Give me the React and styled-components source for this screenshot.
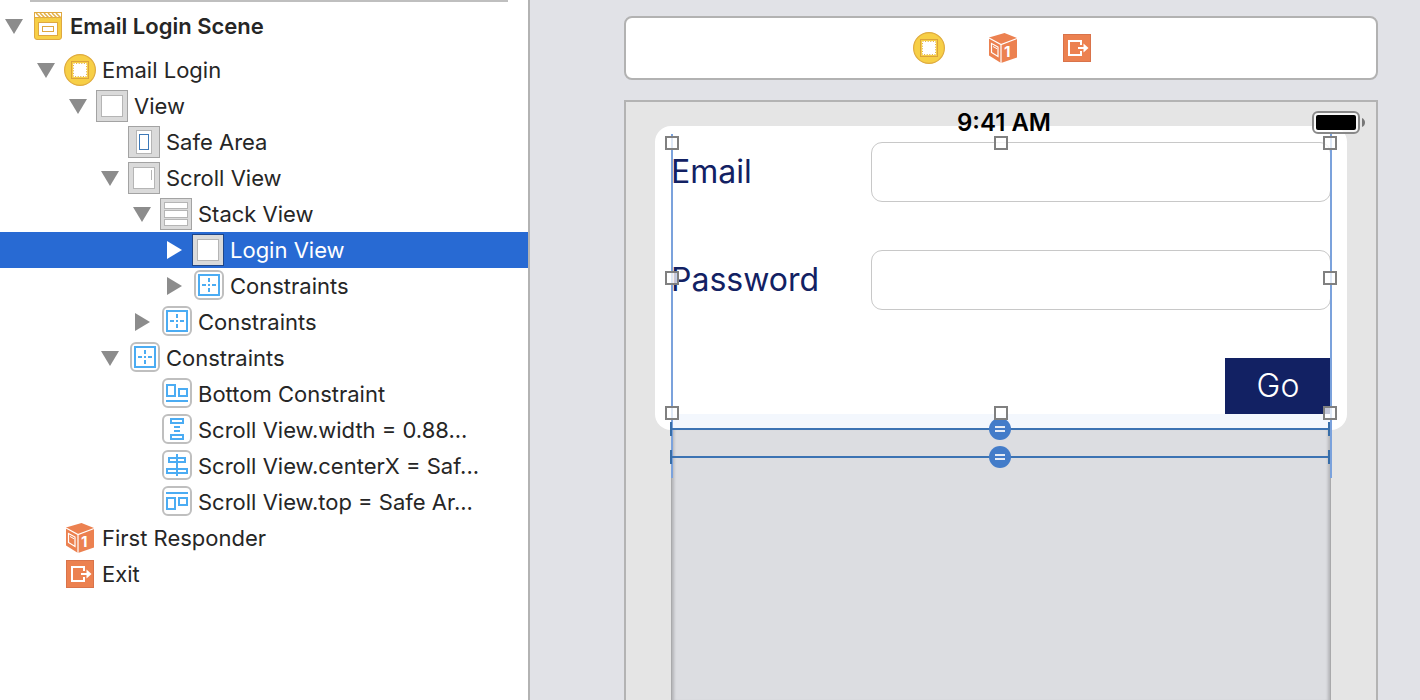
import React from 'react';
import styled, { createGlobalStyle, css } from 'styled-components';

const GlobalStyle = createGlobalStyle`
    * {
        box-sizing: border-box;
    }
    body {
        margin: 0;
        font-family: Inter, "Liberation Sans", sans-serif;
        color: #262626;
        background: #e1e2e7;
    }
`;

const Page = styled.div`
    display: flex;
    height: 100vh;
    min-height: 640px;
    overflow: hidden;
`;

/* Document outline */

const Outline = styled.nav`
    flex: 0 0 530px;
    min-width: 0;
    background: #ffffff;
    border-right: 2px solid #b3b3b3;
`;

const Divider = styled.div`
    height: 2px;
    margin: 0 20px 0 30px;
    background: #bfbfbf;
`;

const Tree = styled.ul`
    list-style: none;
    margin: 0;
    padding: 0;
`;

const Row = styled.li`
    display: flex;
    align-items: center;
    height: 36px;
    padding-left: ${props => props.$depth * 32}px;
    padding-right: 40px;
    font-size: 22px;
    line-height: 28px;
    ${props => props.$scene && css`
        height: 48px;
        margin-bottom: 2px;
        font-weight: 600;
    `}
    ${props => props.$selected && css`
        background: #286ad3;
        color: #ffffff;
    `}
`;

const Toggle = styled.button`
    flex: none;
    display: flex;
    align-items: center;
    justify-content: center;
    width: 28px;
    height: 28px;
    margin-right: 4px;
    padding: 0;
    border: 0;
    background: none;
    color: ${props => (props.$selected ? '#ffffff' : '#8c8c8c')};
`;

const ToggleSpace = styled.span`
    flex: none;
    width: 32px;
`;

const Label = styled.span`
    margin-left: 6px;
    white-space: nowrap;
`;

const Glyph = styled.svg`
    flex: none;
    display: block;
    width: 32px;
    height: 32px;
`;

/* Canvas */

const Canvas = styled.main`
    flex: 1;
    min-width: 0;
    display: flex;
    flex-direction: column;
    gap: 20px;
    padding: 16px 42px 0 94px;
`;

const Dock = styled.div`
    flex: none;
    display: flex;
    align-items: center;
    justify-content: center;
    gap: 42px;
    height: 64px;
    padding-left: 4px;
    background: #ffffff;
    border: 2px solid #b2b2b2;
    border-radius: 8px;
`;

const Device = styled.section`
    flex: 1;
    display: flex;
    flex-direction: column;
    position: relative;
    border: 2px solid #b3b3b3;
    border-bottom: 0;
    background: #e5e5e5;
`;

const StatusBar = styled.div`
    position: absolute;
    top: 0;
    left: 0;
    right: 0;
    display: grid;
    grid-template-columns: 1fr auto 1fr;
    align-items: center;
    height: 42px;
    padding: 0 10px 0 16px;
    color: #000000;
`;

const Time = styled.span`
    grid-column: 2;
    font-size: 24px;
    line-height: 28px;
    font-weight: 600;
`;

const Battery = styled.svg`
    display: block;
    justify-self: end;
    width: 54px;
    height: 24px;
`;

const Card = styled.div`
    flex: none;
    margin: 24px 29px 0;
    padding: 16px 16px 0;
    background: #ffffff;
    border-radius: 16px;
`;

const Selection = styled.div`
    position: relative;
`;

const Form = styled.form`
    display: grid;
    grid-template-columns: 200px 1fr;
    row-gap: 48px;
    color: #122163;
    font-size: 32px;
    line-height: 40px;
`;

const FieldLabel = styled.label`
    align-self: center;
`;

const Field = styled.input`
    width: 100%;
    height: 60px;
    padding: 0 12px;
    border: 1px solid #c8c8c8;
    border-radius: 11px;
    background: #ffffff;
    font: inherit;
    color: inherit;
    outline: none;
`;

const Submit = styled.button`
    grid-column: 2;
    justify-self: end;
    width: 106px;
    height: 56px;
    padding: 0;
    border: 0;
    background: #122163;
    color: #ffffff;
    font: inherit;
    font-weight: 300;
`;

const Tint = styled.div`
    height: 16px;
    background: #f3f7fd;
`;

const ScrollArea = styled.div`
    flex: 1;
    margin: 0 45px;
    background: #dcdde1;
    border: solid #a9a9ab;
    border-width: 0 1px;
    box-shadow: inset 4px 0 3px -2px #b4b4b8, inset -4px 0 3px -2px #b4b4b8;
`;

const Guide = styled.span`
    position: absolute;
    top: -8px;
    bottom: -64px;
    ${props => props.$side}: ${props => (props.$side === 'left' ? 0 : -1)}px;
    width: 2px;
    background: #7ba2dc;
`;

const WidthLine = styled.div`
    position: absolute;
    top: calc(100% + ${props => props.$drop}px);
    left: -1px;
    right: 1px;
    height: 14px;
    display: flex;
    align-items: center;
    justify-content: center;
    border: solid #376da8;
    border-width: 0 2px;
    background: linear-gradient(#3c73b3, #3c73b3) center / 100% 2px no-repeat;
`;

const Equal = styled.svg`
    flex: none;
    width: 22px;
    height: 22px;
`;

const Handles = styled.div`
    position: absolute;
    inset: 1px;
    pointer-events: none;
`;

const Handle = styled.span`
    position: absolute;
    left: ${props => props.$x}%;
    top: ${props => props.$y}%;
    width: 14px;
    height: 14px;
    margin: -7px;
    border: 2px solid #808080;
    background: rgba(255, 255, 255, 0.75);
`;

const handles = [
    [0, 0], [50, 0], [100, 0],
    [0, 50], [100, 50],
    [0, 100], [50, 100], [100, 100],
];

function Arrow({ open }) {
    return (
        <svg width="18" height="18" viewBox="0 0 18 18" fill="currentColor" aria-hidden="true">
            <path d={open ? 'M0 2h18L9 17z' : 'M2 0l15 9-15 9z'} />
        </svg>
    );
}

function SceneIcon() {
    return (
        <Glyph viewBox="0 0 32 32">
            <path d="M2.500 7.500h27V27q0 2.500-2.500 2.500H5Q2.500 29.500 2.500 27z" fill="#f7cf46" stroke="#dfa840" />
            <rect x="2.500" y="2.500" width="27" height="5" fill="#fff" stroke="#dfa840" />
            <path d="M4 3l5 5M8 3l5 5M12 3l5 5M16 3l5 5M20 3l5 5M24 3l5 5" stroke="#e3b044" strokeWidth="1.500" />
            <rect x="6.500" y="12.500" width="19" height="13" fill="#fff" stroke="#dfa840" />
            <rect x="10.500" y="16.500" width="11" height="5" fill="#fff" stroke="#dfa840" />
        </Glyph>
    );
}

function ControllerIcon() {
    return (
        <Glyph viewBox="0 0 32 32">
            <circle cx="16" cy="16" r="15.400" fill="#f7cf46" stroke="#dfab3f" strokeWidth="1.200" />
            <rect x="7.500" y="7.500" width="17" height="17" fill="#f7cf46" stroke="#dba33c" />
            <rect x="9" y="9" width="14" height="14" fill="#fff" />
            <rect x="9.500" y="9.500" width="13" height="13" fill="none" stroke="#dfab3f" strokeDasharray="1 1.600" />
        </Glyph>
    );
}

function FrameIcon({ children, selected }) {
    return (
        <Glyph viewBox="0 0 32 32" fill="#fff" stroke="#b5b5b5">
            <rect x="0.500" y="0.500" width="31" height="31" fill="#dadada" stroke={selected ? '#1f4688' : '#a3a3a3'} />
            {children}
        </Glyph>
    );
}

function ViewIcon({ selected }) {
    return (
        <FrameIcon selected={selected}>
            <rect x="5.500" y="5.500" width="21" height="21" />
        </FrameIcon>
    );
}

function SafeAreaIcon() {
    return (
        <FrameIcon>
            <rect x="8.500" y="4.500" width="15" height="23" />
            <rect x="11.500" y="8.500" width="9" height="15" stroke="#3d79b8" />
        </FrameIcon>
    );
}

function ScrollIcon() {
    return (
        <FrameIcon>
            <rect x="5.500" y="5.500" width="21" height="21" />
            <path d="M23.500 8v10" />
        </FrameIcon>
    );
}

function StackIcon() {
    return (
        <FrameIcon>
            <rect x="4.500" y="4.500" width="23" height="6" />
            <rect x="4.500" y="12.500" width="23" height="7" />
            <rect x="4.500" y="21.500" width="23" height="6" />
        </FrameIcon>
    );
}

const constraintPaths = {
    group: 'M7 5h20v20H7zM17 8v4M17 14v2M17 18v4M10 15h4M16 15h2M20 15h4',
    bottom: 'M7 7h8v11H7zM19 11h8v7h-8zM6 23h22',
    width: 'M11 5h12v4H11zM11 21h12v4H11zM14 13h6M14 17h6',
    centerX: 'M9 8h16v4H9zM7 19h20v4H7zM17 4v22',
    top: 'M6 7h22M7 12h8v11H7zM19 12h8v7h-8z',
};

function ConstraintIcon({ kind }) {
    return (
        <Glyph viewBox="0 0 32 32" fill="#fff" strokeWidth="2">
            <rect x="3" y="1" width="28" height="28" rx="5" stroke="#bfbfbf" />
            <path d={constraintPaths[kind]} stroke="#4bacf3" fill="none" />
        </Glyph>
    );
}

const One = styled.text`
    font-size: 15px;
    font-weight: 700;
    fill: #ffffff;
`;

function ResponderIcon() {
    return (
        <Glyph viewBox="0 0 32 32" fill="none">
            <path d="M17.500 1L30 6v19.500L14 31 2 23.500v-18z" fill="#ec8150" />
            <path d="M2 6l12 6.500L30 6.500M14 12.500V31" stroke="#fff" strokeWidth="1.200" />
            <path d="M4.500 11.500l6.500 3.500v9.500l-6.500-4z" stroke="#fff" strokeWidth="1.200" />
            <path d="M6 14.500l4 2.200" stroke="#fff" />
            <One x="17" y="25">1</One>
        </Glyph>
    );
}

function ExitIcon() {
    return (
        <Glyph viewBox="0 0 32 32">
            <rect x="2.500" y="2.500" width="27" height="27" fill="#ec8150" stroke="#d9734a" />
            <path d="M20 13V9H8v14h12v-4M17 16h6" fill="none" stroke="#fff" strokeWidth="2" />
            <path d="M22.500 11.500l5 4.500-5 4.500z" fill="#fff" />
        </Glyph>
    );
}

const items = [
    { depth: 0, open: true, icon: <SceneIcon />, text: 'Email Login Scene', scene: true },
    { depth: 1, open: true, icon: <ControllerIcon />, text: 'Email Login' },
    { depth: 2, open: true, icon: <ViewIcon />, text: 'View' },
    { depth: 3, icon: <SafeAreaIcon />, text: 'Safe Area' },
    { depth: 3, open: true, icon: <ScrollIcon />, text: 'Scroll View' },
    { depth: 4, open: true, icon: <StackIcon />, text: 'Stack View' },
    { depth: 5, open: false, icon: <ViewIcon selected />, text: 'Login View', selected: true },
    { depth: 5, open: false, icon: <ConstraintIcon kind="group" />, text: 'Constraints' },
    { depth: 4, open: false, icon: <ConstraintIcon kind="group" />, text: 'Constraints' },
    { depth: 3, open: true, icon: <ConstraintIcon kind="group" />, text: 'Constraints' },
    { depth: 4, icon: <ConstraintIcon kind="bottom" />, text: 'Bottom Constraint' },
    { depth: 4, icon: <ConstraintIcon kind="width" />, text: 'Scroll View.width = 0.88...' },
    { depth: 4, icon: <ConstraintIcon kind="centerX" />, text: 'Scroll View.centerX = Saf...' },
    { depth: 4, icon: <ConstraintIcon kind="top" />, text: 'Scroll View.top = Safe Ar...' },
    { depth: 1, icon: <ResponderIcon />, text: 'First Responder' },
    { depth: 1, icon: <ExitIcon />, text: 'Exit' },
];

function TreeRow(props) {
    const { depth, open, icon, text, scene, selected } = props;
    return (
        <Row $depth={depth} $scene={scene} $selected={selected}>
            {open === undefined ? <ToggleSpace /> : (
                <Toggle type="button" aria-label={text} aria-expanded={open} $selected={selected}>
                    <Arrow open={open} />
                </Toggle>
            )}
            {icon}
            <Label>{text}</Label>
        </Row>
    );
}

function EqualWidth({ drop }) {
    return (
        <WidthLine $drop={drop}>
            <Equal viewBox="0 0 22 22">
                <circle cx="11" cy="11" r="11" fill="#437cc9" />
                <path d="M6 9h10M6 13h10" stroke="#e6ecf5" strokeWidth="2" />
            </Equal>
        </WidthLine>
    );
}

function LoginView() {
    return (
        <Selection>
            <Form onSubmit={e => e.preventDefault()}>
                <FieldLabel htmlFor="email">Email</FieldLabel>
                <Field id="email" type="email" />
                <FieldLabel htmlFor="password">Password</FieldLabel>
                <Field id="password" type="password" />
                <Submit type="submit">Go</Submit>
            </Form>
            <Guide $side="left" />
            <Guide $side="right" />
            <EqualWidth drop={8} />
            <EqualWidth drop={36} />
            <Handles>
                {handles.map(([x, y]) => <Handle key={`${x}-${y}`} $x={x} $y={y} />)}
            </Handles>
        </Selection>
    );
}

function App() {
    return (
        <Page>
            <GlobalStyle />
            <Outline>
                <Divider />
                <Tree>
                    {items.map((item, i) => <TreeRow key={i} {...item} />)}
                </Tree>
            </Outline>
            <Canvas>
                <Dock>
                    <ControllerIcon />
                    <ResponderIcon />
                    <ExitIcon />
                </Dock>
                <Device>
                    <Card>
                        <LoginView />
                        <Tint />
                    </Card>
                    <ScrollArea />
                    <StatusBar>
                        <Time>9:41 AM</Time>
                        <Battery viewBox="0 0 54 24">
                            <rect x="1" y="1" width="46" height="21" rx="5" fill="#fff" fillOpacity="0.7" stroke="#888" strokeWidth="2" />
                            <rect x="4" y="4" width="40" height="15" rx="2" />
                            <path d="M50 7q3 1.500 3 4.500t-3 4.500z" fill="#777" />
                        </Battery>
                    </StatusBar>
                </Device>
            </Canvas>
        </Page>
    );
}

export default App;
